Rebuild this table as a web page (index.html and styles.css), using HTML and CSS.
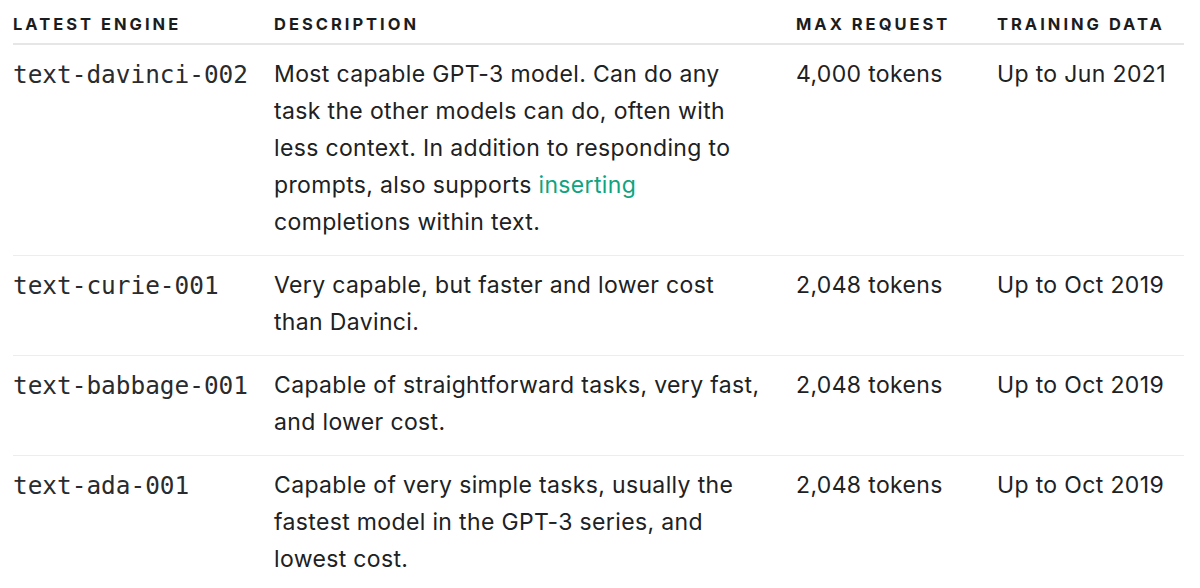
FILE: index.html
```html
<!DOCTYPE html>
<html>
<head>
<meta charset="utf-8">
<link rel="stylesheet" href="styles.css">
</head>
<body>
<div class="models">
  <div class="row head">
    <div class="cell">LATEST ENGINE</div>
    <div class="cell">DESCRIPTION</div>
    <div class="cell">MAX REQUEST</div>
    <div class="cell">TRAINING DATA</div>
  </div>
  <div class="row">
    <div class="cell mono">text-davinci-002</div>
    <div class="cell desc">Most capable GPT-3 model. Can do any task the other models can do, often with less context. In addition to responding to prompts, also supports <a class="link" href="#">inserting</a> completions within text.</div>
    <div class="cell">4,000 tokens</div>
    <div class="cell">Up to Jun 2021</div>
  </div>
  <div class="row">
    <div class="cell mono">text-curie-001</div>
    <div class="cell desc">Very capable, but faster and lower cost than Davinci.</div>
    <div class="cell">2,048 tokens</div>
    <div class="cell">Up to Oct 2019</div>
  </div>
  <div class="row">
    <div class="cell mono">text-babbage-001</div>
    <div class="cell desc">Capable of straightforward tasks, very fast, and lower cost.</div>
    <div class="cell">2,048 tokens</div>
    <div class="cell">Up to Oct 2019</div>
  </div>
  <div class="row last">
    <div class="cell mono">text-ada-001</div>
    <div class="cell desc">Capable of very simple tasks, usually the fastest model in the GPT-3 series, and lowest cost.</div>
    <div class="cell">2,048 tokens</div>
    <div class="cell">Up to Oct 2019</div>
  </div>
</div>
</body>
</html>
```

FILE: styles.css
```css
html, body {
  margin: 0;
  padding: 0;
  background: #ffffff;
}

body {
  font-family: Inter, "Noto Sans", sans-serif;
  color: #202123;
  padding: 0 16px 0 13px;
}

.models {
  width: 1171px;
}

.row {
  display: grid;
  grid-template-columns: 261px 522px 201px 187px;
  border-bottom: 1px solid #ececf1;
  font-size: 23px;
  letter-spacing: 0.35px;
  line-height: 37px;
  padding: 11px 0 14px;
}

.row.last {
  border-bottom: none;
}

.row.head {
  font-size: 16.5px;
  font-weight: 700;
  letter-spacing: 3px;
  line-height: 20px;
  padding: 14px 0 9px;
  border-bottom: 2px solid #e6e6e9;
  color: #1b1c1e;
}

.cell {
  padding-right: 8px;
  white-space: nowrap;
}

.desc {
  padding-right: 28px;
  white-space: normal;
}

.mono {
  font-family: "DejaVu Sans Mono", "Liberation Mono", monospace;
  font-size: 24.4px;
  letter-spacing: 0;
  color: #2a2b2e;
}

.link {
  color: #10a37f;
  text-decoration: none;
}
```
